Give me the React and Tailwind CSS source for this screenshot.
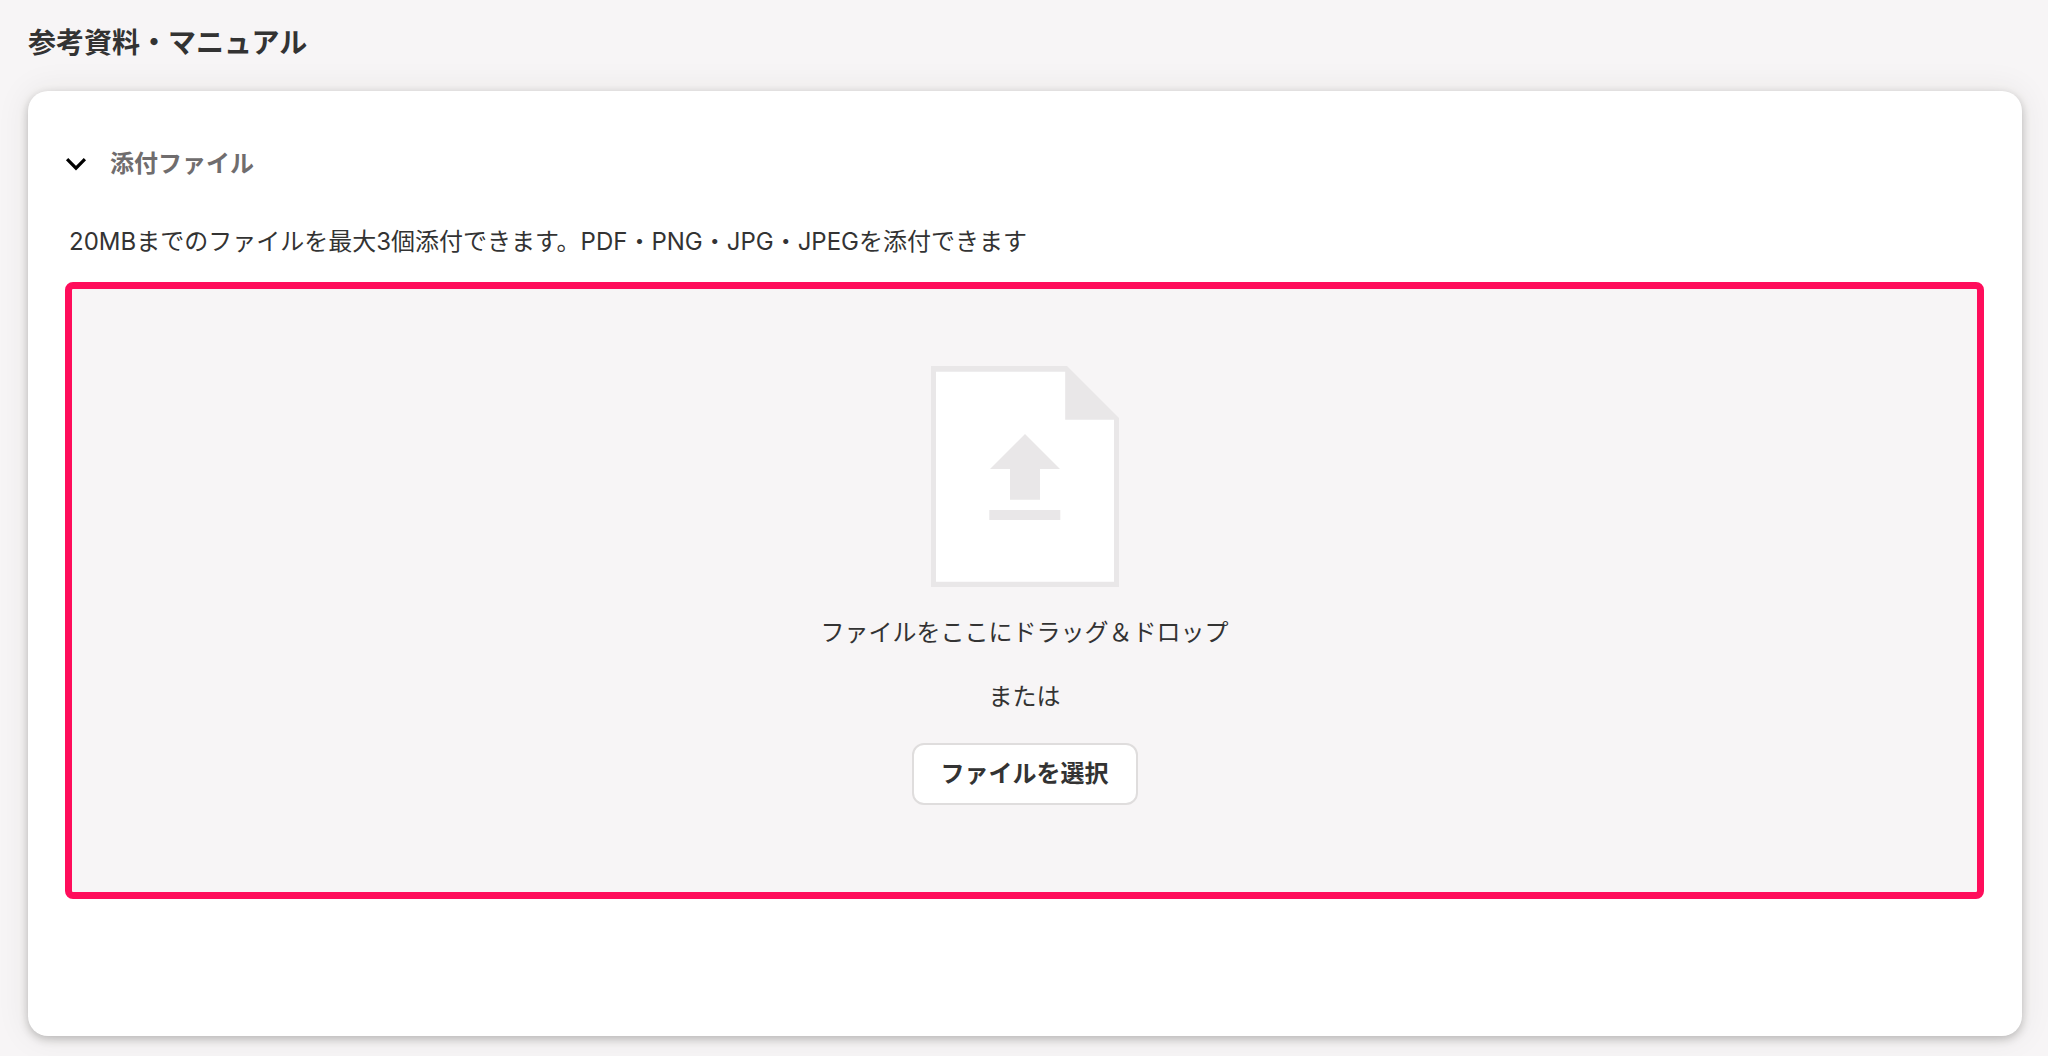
import React, { useRef, useState } from 'react';

const ChevronIcon = ({ open }) => (
    <svg
        viewBox="0 0 24 24"
        className={open ? 'w-6 h-6' : 'w-6 h-6 -rotate-90'}
        fill="none"
        stroke="#000000"
        strokeWidth="3.2"
        aria-hidden="true"
    >
        <path d="M2.1 7.2 L11 16.2 L19.9 7.2" />
    </svg>
);

const UploadFileIcon = () => (
    <svg viewBox="0 0 188 221" className="w-[188px] h-[221px]" aria-hidden="true">
        <path d="M0 0 H136 L188 52 V221 H0 Z" fill="#e9e7e8" />
        <path d="M5 5.7 H134.2 V53.7 H183 V215.8 H5 Z" fill="#ffffff" />
        <path d="M94 68 L129 103 H109 V133.8 H79 V103 H59 Z" fill="#e9e7e8" />
        <path d="M58.3 144 H129.3 V154 H58.3 Z" fill="#e9e7e8" />
    </svg>
);

const FileDropzone = () => {
    const inputRef = useRef(null);

    return (
        <div
            className="flex flex-col items-center rounded-lg border-[7px] border-[#ff0d5b] bg-[#f7f5f6] pt-[77px] pb-[87px]"
            onDragOver={(e) => e.preventDefault()}
            onDrop={(e) => e.preventDefault()}
        >
            <UploadFileIcon />
            <p className="mt-7">ファイルをここにドラッグ＆ドロップ</p>
            <p className="mt-7">または</p>
            <input
                ref={inputRef}
                type="file"
                multiple
                accept=".pdf,.png,.jpg,.jpeg"
                aria-label="添付ファイル"
                className="hidden"
            />
            <button
                type="button"
                onClick={() => inputRef.current.click()}
                className="mt-7 rounded-xl border-2 border-[#dfdddd] bg-white px-[27px] py-[11px] font-bold"
            >
                ファイルを選択
            </button>
        </div>
    );
};

const App = () => {
    const [open, setOpen] = useState(true);

    return (
        <main className="bg-[#f7f5f6] pt-[22px] pr-[26px] pb-5 pl-7 font-[Inter,'Noto_Sans_CJK_JP',sans-serif] text-[24px] leading-9 text-[#333333]">
            <h1 className="text-[28px] leading-[42px] font-bold">参考資料・マニュアル</h1>

            <section className="mt-[27px] rounded-[20px] bg-white pt-[55px] pr-[38px] pb-[137px] pl-[37px] shadow-[0_3px_10px_rgba(0,0,0,0.24),0_0_32px_4px_rgba(50,50,0,0.06)]">
                <h2>
                    <button
                        type="button"
                        aria-expanded={open}
                        onClick={() => setOpen(!open)}
                        className="flex items-center gap-[21px] font-bold text-[#706d6e]"
                    >
                        <ChevronIcon open={open} />
                        添付ファイル
                    </button>
                </h2>

                {open && (
                    <div className="mt-[42px]">
                        <p className="mb-[22px] pl-1">
                            20MBまでのファイルを最大3個添付できます。PDF・PNG・JPG・JPEGを添付できます
                        </p>
                        <FileDropzone />
                    </div>
                )}
            </section>
        </main>
    );
};

export default App;
